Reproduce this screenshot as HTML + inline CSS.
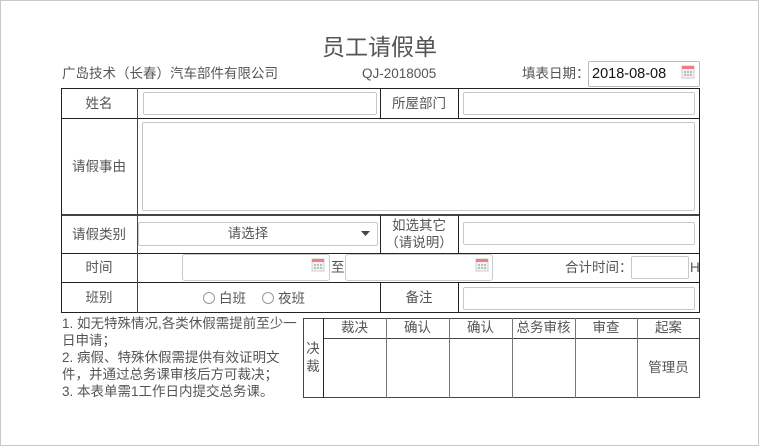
<!DOCTYPE html>
<html><head><meta charset="utf-8"><style>
*{margin:0;padding:0;box-sizing:border-box}
body{width:759px;height:446px;background:#fff;position:relative;overflow:hidden;font-family:"Liberation Sans","Noto Sans CJK SC",sans-serif;color:#555;font-size:13.5px}
.a{position:absolute}
.frame{left:0;top:0;width:759px;height:446px;border:1px solid #c8c8c8}
.l{position:absolute;background:#222}
.box{position:absolute;border:1px solid #c8c8c8;background:#fff;border-radius:2px}
.t{position:absolute;white-space:nowrap;line-height:16px}
.cal{position:absolute;width:14px;height:14px}
.g{position:absolute;background:#777}
</style></head><body>
<div class="a frame"></div>
<div class="t" style="left:0;width:759px;text-align:center;top:34px;font-size:23px;line-height:27px;color:#555">员工请假单</div>
<div class="t" style="left:62px;top:66px">广岛技术（长春）汽车部件有限公司</div>
<div class="t" style="left:362px;top:66px">QJ-2018005</div>
<div class="t" style="left:522px;top:66px">填表日期：</div>
<div class="box" style="left:588px;top:61px;width:112px;height:26px;border-color:#bbb"></div>
<div class="t" style="left:592px;top:66px;color:#111;font-size:14.5px">2018-08-08</div>
<svg class="cal" style="left:681px;top:65px" viewBox="0 0 14 14"><rect x="1" y="1" width="12" height="12" fill="#f4f4f4" stroke="#ccc"/><rect x="1" y="1" width="12" height="3" fill="#f08080"/><g fill="#bbb"><rect x="3" y="6" width="2" height="2"/><rect x="6" y="6" width="2" height="2"/><rect x="9" y="6" width="2" height="2"/><rect x="3" y="9" width="2" height="2"/><rect x="6" y="9" width="2" height="2"/><rect x="9" y="9" width="2" height="2"/></g></svg>

<div class="l" style="left:61px;top:88px;width:639px;height:1px"></div>
<div class="l" style="left:61px;top:118px;width:639px;height:1px"></div>
<div class="l" style="left:61px;top:214px;width:639px;height:2px;background:#444"></div>
<div class="l" style="left:61px;top:253px;width:639px;height:1px"></div>
<div class="l" style="left:61px;top:282px;width:639px;height:1px"></div>
<div class="l" style="left:61px;top:312px;width:639px;height:1px"></div>
<div class="l" style="left:61px;top:88px;width:1px;height:225px"></div>
<div class="l" style="left:699px;top:88px;width:1px;height:225px"></div>
<div class="l" style="left:137px;top:88px;width:1px;height:225px;background:#444"></div>
<div class="l" style="left:380px;top:88px;width:1px;height:31px"></div>
<div class="l" style="left:458px;top:88px;width:1px;height:31px"></div>
<div class="l" style="left:380px;top:215px;width:1px;height:39px"></div>
<div class="l" style="left:458px;top:215px;width:1px;height:39px"></div>
<div class="l" style="left:380px;top:282px;width:1px;height:31px"></div>
<div class="l" style="left:458px;top:282px;width:1px;height:31px"></div>

<div class="t" style="left:61px;width:76px;text-align:center;top:96px">姓名</div>
<div class="box" style="left:143px;top:92px;width:234px;height:23px"></div>
<div class="t" style="left:380px;width:78px;text-align:center;top:96px">所屋部门</div>
<div class="box" style="left:463px;top:92px;width:232px;height:23px"></div>

<div class="t" style="left:61px;width:76px;text-align:center;top:159px">请假事由</div>
<div class="box" style="left:142px;top:122px;width:553px;height:89px"></div>

<div class="t" style="left:61px;width:76px;text-align:center;top:227px">请假类别</div>
<div class="box" style="left:138px;top:222px;width:240px;height:24px"></div>
<div class="t" style="left:138px;width:220px;text-align:center;top:226px">请选择</div>
<svg class="a" style="left:361px;top:231px" width="9" height="5"><path d="M0 0H9L4.5 5Z" fill="#444"/></svg>
<div class="t" style="left:380px;width:78px;text-align:center;top:218px">如选其它</div>
<div class="t" style="left:380px;width:78px;text-align:center;top:235px">（请说明）</div>
<div class="box" style="left:463px;top:222px;width:232px;height:23px"></div>

<div class="t" style="left:61px;width:76px;text-align:center;top:260px">时间</div>
<div class="box" style="left:182px;top:254px;width:148px;height:27px;border-color:#ccc;border-radius:3px"></div>
<svg class="cal" style="left:311px;top:258px" viewBox="0 0 14 14"><rect x="1" y="1" width="12" height="12" fill="#f4f4f4" stroke="#ccc"/><rect x="1" y="1" width="12" height="3" fill="#f08080"/><g fill="#bbb"><rect x="3" y="6" width="2" height="2"/><rect x="6" y="6" width="2" height="2"/><rect x="9" y="6" width="2" height="2"/><rect x="3" y="9" width="2" height="2"/><rect x="6" y="9" width="2" height="2"/><rect x="9" y="9" width="2" height="2"/></g></svg>
<div class="t" style="left:331px;top:260px">至</div>
<div class="box" style="left:345px;top:254px;width:148px;height:27px;border-color:#ccc;border-radius:3px"></div>
<svg class="cal" style="left:475px;top:258px" viewBox="0 0 14 14"><rect x="1" y="1" width="12" height="12" fill="#f4f4f4" stroke="#ccc"/><rect x="1" y="1" width="12" height="3" fill="#f08080"/><g fill="#bbb"><rect x="3" y="6" width="2" height="2"/><rect x="6" y="6" width="2" height="2"/><rect x="9" y="6" width="2" height="2"/><rect x="3" y="9" width="2" height="2"/><rect x="6" y="9" width="2" height="2"/><rect x="9" y="9" width="2" height="2"/></g></svg>
<div class="t" style="left:565px;top:260px">合计时间：</div>
<div class="box" style="left:631px;top:256px;width:58px;height:23px"></div>
<div class="t" style="left:690px;top:260px">H</div>

<div class="t" style="left:61px;width:76px;text-align:center;top:290px">班别</div>
<div class="a" style="left:203px;top:292px;width:12px;height:12px;border:1px solid #999;border-radius:50%"></div>
<div class="t" style="left:219px;top:291px">白班</div>
<div class="a" style="left:262px;top:292px;width:12px;height:12px;border:1px solid #999;border-radius:50%"></div>
<div class="t" style="left:278px;top:291px">夜班</div>
<div class="t" style="left:380px;width:78px;text-align:center;top:290px">备注</div>
<div class="box" style="left:463px;top:287px;width:232px;height:23px"></div>

<div class="t" style="left:62px;top:315px;line-height:17px;font-size:13.5px">1. 如无特殊情况,各类休假需提前至少一<br>日申请；<br>2. 病假、特殊休假需提供有效证明文<br>件，并通过总务课审核后方可裁决；<br>3. 本表单需1工作日内提交总务课。</div>

<div class="a" style="left:303px;top:318px;width:397px;height:80px;border:1px solid #444"></div>
<div class="g" style="left:323px;top:338px;width:377px;height:1px;background:#444"></div>
<div class="g" style="left:323px;top:318px;width:1px;height:80px;background:#222"></div>
<div class="g" style="left:386px;top:318px;width:1px;height:80px"></div>
<div class="g" style="left:449px;top:318px;width:1px;height:80px"></div>
<div class="g" style="left:512px;top:318px;width:1px;height:80px"></div>
<div class="g" style="left:575px;top:318px;width:1px;height:80px"></div>
<div class="g" style="left:637px;top:318px;width:1px;height:80px"></div>
<div class="t" style="left:303px;width:20px;text-align:center;top:340px;line-height:18px">决<br>裁</div>
<div class="t" style="left:323px;width:63px;text-align:center;top:320px">裁决</div>
<div class="t" style="left:386px;width:63px;text-align:center;top:320px">确认</div>
<div class="t" style="left:449px;width:63px;text-align:center;top:320px">确认</div>
<div class="t" style="left:512px;width:63px;text-align:center;top:320px">总务审核</div>
<div class="t" style="left:575px;width:62px;text-align:center;top:320px">审查</div>
<div class="t" style="left:637px;width:63px;text-align:center;top:320px">起案</div>
<div class="t" style="left:637px;width:63px;text-align:center;top:360px">管理员</div>
</body></html>
